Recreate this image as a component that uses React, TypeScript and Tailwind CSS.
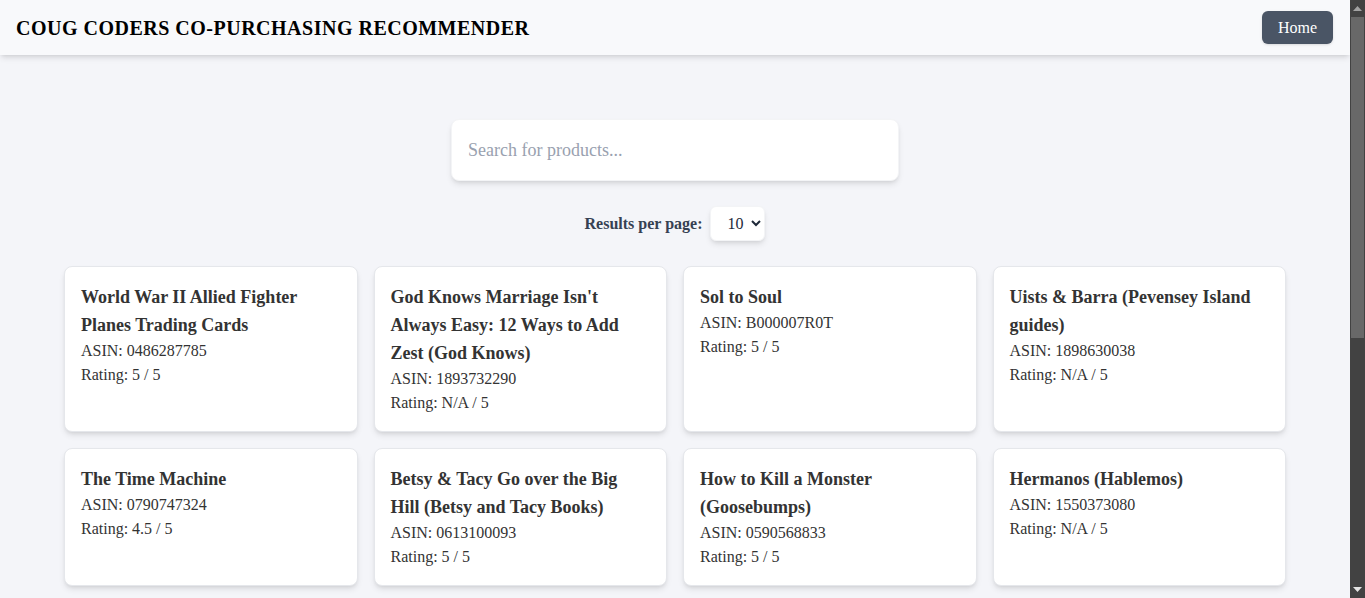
const products = [
  { title: "World War II Allied Fighter Planes Trading Cards", asin: "0486287785", rating: "5" },
  { title: "God Knows Marriage Isn't Always Easy: 12 Ways to Add Zest (God Knows)", asin: "1893732290", rating: "N/A" },
  { title: "Sol to Soul", asin: "B000007R0T", rating: "5" },
  { title: "Uists & Barra (Pevensey Island guides)", asin: "1898630038", rating: "N/A" },
  { title: "The Time Machine", asin: "0790747324", rating: "4.5" },
  { title: "Betsy & Tacy Go over the Big Hill (Betsy and Tacy Books)", asin: "0613100093", rating: "5" },
  { title: "How to Kill a Monster (Goosebumps)", asin: "0590568833", rating: "5" },
  { title: "Hermanos (Hablemos)", asin: "1550373080", rating: "N/A" },
];

function ProductCard({ title, asin, rating }: { title: string; asin: string; rating: string }) {
  return (
    <div className="rounded-lg border border-gray-200 bg-white p-4 text-[#333] shadow-md">
      <h3 className="text-lg font-bold leading-7">{title}</h3>
      <p className="text-base leading-6">ASIN: {asin}</p>
      <p className="text-base leading-6">Rating: {rating} / 5</p>
    </div>
  );
}

// stand-in for the browser's dark scrollbar
function Scrollbar() {
  return (
    <div className="flex h-full w-[15px] shrink-0 flex-col items-center bg-[#424242]">
      <div className="flex h-[17px] w-full items-center justify-center">
        <svg width="9" height="5" viewBox="0 0 9 5">
          <path d="M0 5 L4.5 0 L9 5 Z" fill="#a3a3a3" />
        </svg>
      </div>
      <div className="h-[321px] w-[13px] bg-[#686868]" />
      <div className="flex-1" />
      <div className="flex h-[17px] w-full items-center justify-center">
        <svg width="9" height="5" viewBox="0 0 9 5">
          <path d="M0 0 L9 0 L4.5 5 Z" fill="#e5e5e5" />
        </svg>
      </div>
    </div>
  );
}

export default function App() {
  return (
    <div className="flex h-screen overflow-hidden font-['Liberation_Serif','Times_New_Roman',serif]">
      <div className="h-full min-w-0 flex-1 overflow-hidden bg-[#f4f5f9]">
        <header className="flex h-[55px] items-center justify-between bg-[#f8f9fb] pl-4 pr-[17px] shadow-md">
          <h1 className="text-xl font-bold uppercase tracking-wide text-black">
            Coug Coders Co-Purchasing Recommender
          </h1>
          <button className="h-[33px] rounded-md bg-gray-600 px-4 font-['Liberation_Serif',serif] text-base text-white shadow">
            Home
          </button>
        </header>

        <main className="px-4 pt-16">
          <div className="mx-auto w-[448px]">
            <input
              type="text"
              placeholder="Search for products..."
              className="w-full rounded-lg border border-gray-100 bg-white px-4 py-4 font-['Liberation_Serif',serif] text-lg leading-7 shadow-md outline-none placeholder:text-gray-400"
            />
          </div>

          <div className="mt-[25px] flex items-center justify-center gap-2">
            <label className="text-base font-bold text-gray-700">Results per page:</label>
            <select
              defaultValue="10"
              className="h-[35px] w-[55px] rounded-md border border-gray-100 bg-white pl-3 font-['Liberation_Serif',serif] text-base text-gray-800 shadow-md"
            >
              <option value="5">5</option>
              <option value="10">10</option>
              <option value="20">20</option>
              <option value="50">50</option>
            </select>
          </div>

          <div className="mx-auto mt-[25px] grid max-w-[1222px] grid-cols-4 gap-4 pb-8">
            {products.map((p) => (
              <ProductCard key={p.asin} {...p} />
            ))}
          </div>
        </main>
      </div>
      <Scrollbar />
    </div>
  );
}
